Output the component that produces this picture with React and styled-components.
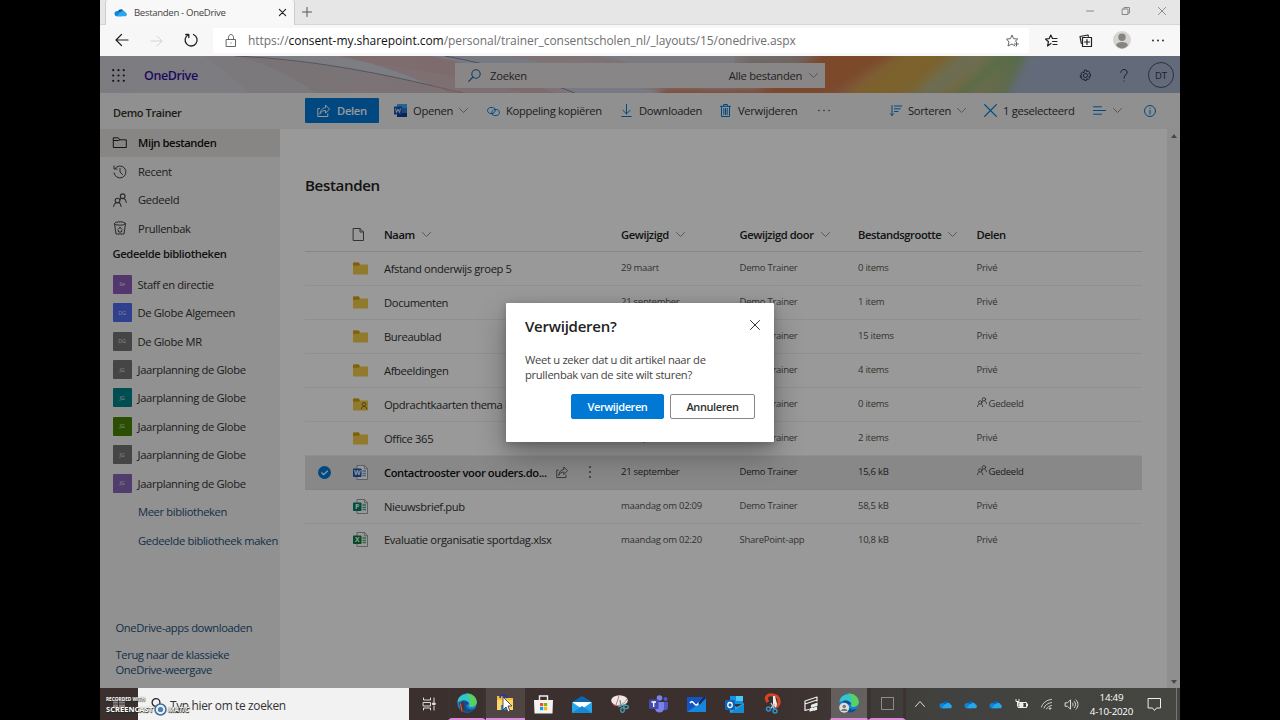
import React from "react";
import styled, { createGlobalStyle } from "styled-components";

const Global = createGlobalStyle`
  * { box-sizing: border-box; }
  html, body { margin: 0; padding: 0; background: #000; }
  body { width: 1280px; height: 720px; overflow: hidden; font-family: "Open Sans", "Noto Sans", sans-serif; font-size: 11.2px; letter-spacing: -0.36px; color: #323130; }
  svg { display: block; flex: none; overflow: visible; }
`;

const Screen = styled.div`
  width: 1080px; height: 720px; margin: 0 100px; display: flex; flex-direction: column; background: #fff; overflow: hidden;
`;

/* browser chrome */
const TabStrip = styled.div`
  height: 25px; flex: none; display: flex; background: #e6e6e6; border-bottom: 1px solid #d6d6d6;
`;
const Tab = styled.div`
  width: 190px; height: 25px; margin-left: 5px; padding: 0 8px 1px 8px; display: flex; align-items: center;
  background: #f8f8f8; border-left: 1px solid #ccc; border-right: 1px solid #ccc; border-radius: 3px 3px 0 0;
`;
const TabTitle = styled.span`
  flex: 1; margin-left: 7px; font-size: 9.6px; letter-spacing: -0.33px; color: #444; white-space: nowrap;
`;
const NewTab = styled.div`width: 24px; display: flex; align-items: center; justify-content: center;`;
const WindowButtons = styled.div`
  margin-left: auto; width: 108px; display: flex; align-items: center; justify-content: space-around; padding-bottom: 2px;
`;
const AddressRow = styled.div`
  height: 31px; flex: none; display: flex; align-items: center; background: #f7f7f7; padding-bottom: 1px;
`;
const NavButtons = styled.div`
  width: 113px; display: flex; align-items: center; padding-left: 15px; gap: 21px;
`;
const Address = styled.div`
  width: 816px; height: 25px; background: #fff; border-radius: 2px; display: flex; align-items: center; padding: 0 10px 0 12px;
`;
const Url = styled.span`
  flex: 1; margin-left: 11px; font-size: 12px; color: #6f6f6f; white-space: nowrap; letter-spacing: -0.05px;
  b { font-weight: 400; color: #111; }
`;
const BrowserTools = styled.div`
  flex: 1; display: flex; align-items: center; justify-content: space-between; padding: 0 16px 0 16px;
`;

/* page */
const Page = styled.div`
  position: relative; height: 632px; flex: none; display: flex; flex-direction: column; background: #fff;
`;
const Suite = styled.header`
  height: 37px; flex: none; display: grid; background: #d6d6e0; overflow: hidden;
  > * { grid-area: 1 / 1; }
`;
const SuiteRow = styled.div`
  position: relative; display: flex; align-items: center; padding: 1px 0 0 12px;
`;
const Brand = styled.span`
  width: 311px; margin-left: 19px; font-size: 12.5px; font-weight: 600; letter-spacing: -0.4px; color: #32109c;
`;
const SearchBox = styled.div`
  width: 370px; height: 25px; display: flex; align-items: center; padding: 0 7px 0 13px; background: #e3e0df; color: #3a3a3a;
`;
const SearchText = styled.span`flex: 1; margin-left: 9px; letter-spacing: -0.25px;`;
const SuiteTools = styled.div`
  flex: 1; display: flex; align-items: center; padding: 0 6px 0 254px;
`;
const Help = styled.div`width: 8px; margin-left: 28px;`;
const Initials = styled.div`
  width: 26px; height: 26px; margin-left: auto; border: 1px solid #48506a; border-radius: 50%; display: flex; align-items: center; justify-content: center;
  font-size: 9.5px; letter-spacing: 0; color: #2b3045;
`;
const Body = styled.div`flex: 1; display: flex; min-height: 0;`;
const Sidebar = styled.nav`
  width: 180px; flex: none; display: flex; flex-direction: column; background: #f2f2f2;
`;
const Owner = styled.div`
  height: 36px; padding: 10px 0 0 13px; background: #f1f1f1; font-weight: 600; font-size: 11px; line-height: 20px; letter-spacing: -0.38px;
`;
const NavItem = styled.div`
  height: ${p => p.$h || 28.45}px; flex: none; display: flex; align-items: center; padding: 0 0 ${p => p.$up || 0}px 12.5px; white-space: nowrap;
  background: ${p => (p.$active ? "#e1dfdd" : "transparent")};
  font-weight: ${p => (p.$active ? 600 : 400)};
  letter-spacing: ${p => (p.$active ? "-0.4px" : "-0.33px")};
  color: ${p => (p.$active ? "#111" : "#323130")};
  > svg { margin-right: 11.5px; }
`;
const NavHeading = styled.div`
  height: 27px; flex: none; padding: 0 0 0 12.5px; line-height: 24px; font-weight: 600; letter-spacing: -0.38px; white-space: nowrap; color: #222;
`;
const Tile = styled.span`
  width: 19px; height: 19px; margin-right: 6px; border-radius: 1px; display: flex; align-items: center; justify-content: center;
  background: ${p => p.$color}; color: #ddd; font-size: 5.5px; letter-spacing: -0.2px;
`;
const NavLink = styled.a`
  height: 28.45px; flex: none; display: flex; align-items: center; padding-left: 38px; color: #1d5078; white-space: nowrap;
`;
const Footer = styled.div`
  margin-top: auto; padding: 0 0 11px 15.5px; display: flex; flex-direction: column; gap: 12px; color: #1d5078; line-height: 15px; letter-spacing: -0.38px;
`;
const Main = styled.main`flex: 1; display: flex; flex-direction: column; min-width: 0;`;
const CommandBar = styled.div`
  height: 36px; flex: none; display: flex; align-items: center; padding: 0 0 1px 25px; background: #f1f1f1;
`;
const ShareButton = styled.div`
  width: 74px; height: 25px; display: flex; align-items: center; padding-left: 12px; gap: 7px; background: #0078d4; color: #fff; font-weight: 600; letter-spacing: -0.3px; border-radius: 1px;
`;
const Command = styled.div`
  display: flex; align-items: center; width: ${p => p.$w}px; gap: ${p => p.$gap || 6}px; margin-left: ${p => p.$ml || 0}px; white-space: nowrap; letter-spacing: -0.3px;
`;
const Workspace = styled.div`flex: 1; display: flex; min-height: 0;`;
const Content = styled.div`
  flex: 1; padding: 44px 25px 0 25px; display: flex; flex-direction: column;
`;
const Scrollbar = styled.div`
  width: 13px; background: #efefef; display: flex; flex-direction: column; justify-content: space-between; align-items: center; padding: 5px 0 4px;
`;
const Title = styled.h1`
  margin: 0; height: 44px; line-height: 24px; font-size: 15.1px; font-weight: 600; letter-spacing: -0.35px; color: #222;
`;
const columns = "79px 237px 118.5px 118.5px 118.5px 1fr";
const HeadRow = styled.div`
  height: 35px; flex: none; display: grid; grid-template-columns: ${columns}; align-items: center; border-bottom: 1px solid #e0e0e0; font-weight: 600; letter-spacing: -0.42px; color: #222;
`;
const HeadCell = styled.div`display: flex; align-items: center; gap: 7px; white-space: nowrap;`;
const Row = styled.div`
  height: 33.95px; flex: none; display: grid; grid-template-columns: ${columns}; align-items: center;
  border-bottom: 1px solid ${p => (p.$selected ? "#ddd" : "#f0f0f0")};
  background: ${p => (p.$selected ? "#e4e3e3" : "transparent")};
  color: ${p => (p.$selected ? "#323130" : "#555")};
  white-space: nowrap; font-size: 9.5px; letter-spacing: -0.26px;
  &:last-child { border-bottom-color: transparent; }
`;
const IconCell = styled.div`display: flex; align-items: center; justify-content: flex-end; padding-right: ${p => p.$pr || 16}px; gap: 22px;`;
const Name = styled.div`
  display: flex; align-items: center; font-size: 11.2px; font-weight: ${p => (p.$selected ? 600 : 400)}; color: ${p => (p.$selected ? "#111" : "#323130")}; letter-spacing: ${p => (p.$selected ? "-0.4px" : "-0.36px")};
`;
const NameActions = styled.span`display: flex; align-items: center; gap: 21px; margin-left: 9px;`;
const Cell = styled.div`display: flex; align-items: center; gap: 2px; padding-bottom: 1px; > svg { margin-bottom: 3px; }`;

const Overlay = styled.div`
  position: absolute; inset: 0; background: rgba(0, 0, 0, 0.4);
`;
const Dialog = styled.div`
  position: absolute; left: 406px; top: 247px; width: 268px; height: 139px; padding: 11px 19px; background: #fff; border-radius: 1px;
  box-shadow: 0 13px 30px rgba(0, 0, 0, 0.3), 0 2px 8px rgba(0, 0, 0, 0.22); display: flex; flex-direction: column;
`;
const DialogHead = styled.div`
  display: flex; align-items: flex-start; justify-content: space-between; font-size: 15px; font-weight: 600; letter-spacing: -0.25px; line-height: 24px; color: #222;
  > svg { margin: 6px -5px 0 0; }
`;
const DialogText = styled.p`margin: 14px 0 0; line-height: 15px; letter-spacing: -0.31px; color: #444; white-space: nowrap;`;
const DialogActions = styled.div`display: flex; justify-content: flex-end; gap: 6px; margin-top: 12px;`;
const DialogButton = styled.button`
  width: ${p => p.$w}px; height: 25px; padding: 0; font: 600 11px "Open Sans", sans-serif; letter-spacing: -0.4px; border-radius: 2px;
  border: 1px solid ${p => (p.$primary ? "#0078d4" : "#8a8886")};
  background: ${p => (p.$primary ? "#0078d4" : "#fff")};
  color: ${p => (p.$primary ? "#fff" : "#323130")};
`;

/* taskbar */
const Taskbar = styled.div`
  position: relative; height: 32px; flex: none; display: flex; background: linear-gradient(90deg, #3b302e 0%, #3c302e 62%, #41423f 78%, #454641 100%);
`;
const Start = styled.div`width: 38px; display: flex; align-items: center; justify-content: center;`;
const TaskSearch = styled.div`
  width: 271px; background: #f2f2f2; display: flex; align-items: center; padding: 2px 0 0 12px; gap: 7px; font-size: 11.9px; letter-spacing: -0.33px; color: #333; margin-right: 1px;
`;
const TaskCell = styled.div`
  width: 38.2px; display: flex; align-items: center; justify-content: center;
  background: ${p => (p.$hot ? "rgba(255,255,255," + p.$hot + ")" : "transparent")};
  border-bottom: ${p => (p.$open ? "2px solid #d98ad9" : "0")};
  border-left: ${p => (p.$gap ? p.$gap + "px solid #3b3331" : "0")};
  border-right: ${p => (p.$gap ? p.$gap + "px solid #3b3331" : "0")};
`;
const Tray = styled.div`
  flex: 1; display: flex; align-items: center; padding-left: 9px;
`;
const TrayIcon = styled.div`width: ${p => p.$w || 25}px; display: flex; justify-content: center;`;
const Clock = styled.div`
  width: 56px; display: flex; flex-direction: column; align-items: center; font-size: 9.8px; letter-spacing: -0.25px; line-height: 14.5px; color: #fff; white-space: nowrap; padding-top: 2px;
`;
const PeekLine = styled.div`width: 1px; height: 32px; margin-left: auto; margin-right: 3px; background: #777;`;
const Watermark = styled.div`
  position: absolute; left: 6px; top: 8px; color: #fff; font-weight: 700; text-shadow: 0.5px 0.5px 1px #222, 0 0 1px #444;
`;
const WatermarkSmall = styled.div`font-size: 4.8px; line-height: 7px; letter-spacing: -0.05px;`;
const WatermarkLarge = styled.div`
  display: flex; align-items: center; height: 12px; font-size: 7.4px; letter-spacing: 0.1px; gap: 1px; i { color: #eee; letter-spacing: -0.2px; }
`;

const Ic = ({ w = 14, h, vb, c = "#0078d4", s = 1, children }) => (
  <svg width={w} height={h || w} viewBox={vb || `0 0 ${w} ${h || w}`} fill="none" stroke={c} strokeWidth={s} strokeLinecap="round" strokeLinejoin="round">{children}</svg>
);
const Chevron = ({ c = "#777" }) => <Ic w={9} h={5} c={c} s={0.8}><path d="M.5.5l4 4 4-4" /></Ic>;
const Cloud = ({ w = 14 }) => (
  <svg width={w} height={w * 0.64} viewBox="0 0 28 18">
    <path d="M8 8C9 2 18 0 21 7l-7 6z" fill="#0a64b8" /><path d="M1 12c0-4 4-6 8-5l10 8-2 3H6c-3 0-5-3-5-6z" fill="#1284d8" />
    <path d="M12 10l7-4c4 0 5 2 5 3 5 1 5 9 0 9H6z" fill="#28a8ea" />
  </svg>
);
const Share = ({ c, w = 13 }) => <Ic w={w} vb="0 0 13 13" c={c}><path d="M2.500 4.500H.8v8h10V9.800M3 9.800C3.500 6 5.500 4 8.500 3.700V1l4 4.200-4 4V6.500C6 6.500 4.300 7.500 3 9.800z" /></Ic>;
const People = ({ c = "#444", w = 13 }) => (
  <Ic w={w} vb="0 0 13 13" c={c}><circle cx="9" cy="3" r="2.200" /><path d="M7.500 5.100L6.500 6.200M10.200 5.100c1.300.7 2 1.800 2.100 3.500" /><circle cx="4.200" cy="7" r="2.200" /><path d="M.6 12.500c.2-2 1.300-3.200 2.500-3.700M5.500 8.900c1.100.6 1.800 1.800 2 3.600" /></Ic>
);
const Cross = ({ w = 10, c = "#444", s = 1 }) => <Ic w={w} vb="0 0 10 10" c={c} s={s}><path d="M.5.5l9 9M9.500.5l-9 9" /></Ic>;
const Magnifier = ({ c = "#1467ac", w = 13 }) => <Ic w={w} vb="0 0 13 13" c={c} s={1.1}><circle cx="8" cy="5" r="4.200" /><path d="M5 8L.7 12.300" /></Ic>;
const Folder = ({ shared }) => (
  <svg width="15" height="13" viewBox="0 0 15 13">
    <path d="M0 1.200Q0 .5.700.5h5l1.300 2h7.300q.7 0 .7.700v8.600q0 .7-.7.700H.7q-.7 0-.7-.7z" fill="#f4cc4a" />
    <path d="M0 1.200Q0 .5.700.5h5l1.300 2-1.500 1.300H0z" fill="#d69e12" />
    {shared && <g fill="none" stroke="#8f6c1c"><circle cx="11" cy="6.300" r="1.800" /><path d="M8.300 11.300c.2-4 5.200-4 5.400 0" /></g>}
  </svg>
);
const Doc = ({ letter, color, light }) => (
  <svg width="15" height="15" viewBox="0 0 15 15">
    <path d="M4 .5h7.500l3 3v11H4z" fill="#fff" stroke="#888" strokeWidth=".8" /><path d="M11.300.5v3.300h3.200" fill="none" stroke="#888" strokeWidth=".8" />
    <path d="M9.500 6h3.500M9.500 8.300h3.500M9.500 10.500h3.500" stroke={light} strokeWidth="1.300" />
    <rect y="3.500" width="8.500" height="8.500" rx=".7" fill={color} /><text x="4.250" y="10.200" textAnchor="middle" fontSize="6.800" fontWeight="700" fill="#fff" fontFamily="Open Sans" letterSpacing="0">{letter}</text>
  </svg>
);
const Edge = ({ badge }) => (
  <svg width="20" height="20" viewBox="0 0 20 20">
    <circle cx="10" cy="10" r="9.700" fill="#1681ce" />
    <path d="M.5 9C1-1 19-2 19.700 9c.2 4-4 5.500-7.500 4.500C13.500 9 9 5.500.5 9z" fill="#36c7c5" />
    <path d="M9 .4C16 0 20 5 19.700 9.500c-.5 4-5 5-7.500 4C14 8 13 3 9 .4z" fill="#5ad15d" />
    <path d="M4 9c2-3 7-1 8 2-3 0-4 3 0 5 2 1 4 .5 6-.5-3 5-9 5-12 2C3 15 2.500 12 4 9z" fill="#124f91" />
    {badge ? <><circle cx="5.200" cy="14.800" r="5" fill="#ddd" /><circle cx="5.200" cy="13.400" r="1.700" fill="#777" /><path d="M2 18c.5-3 6-3 6.500 0z" fill="#777" /></>
      : <><path d="M2 10l4-1 2 9-4 1z" fill="#5a2e2a" /><path d="M3.500 10.500l1.500 8" stroke="#bd735c" /></>}
  </svg>
);

const Banner = () => (
  <svg width="1080" height="37" viewBox="0 0 1080 37" preserveAspectRatio="none">
    <defs>
      <linearGradient id="base" x1="0" x2="1">
        <stop offset="0" stopColor="#cfcfd6" /><stop offset=".2" stopColor="#d3cfd4" /><stop offset=".34" stopColor="#d6bfc3" /><stop offset=".62" stopColor="#cbc1c4" />
        <stop offset=".68" stopColor="#cb8564" /><stop offset=".71" stopColor="#d49a5c" /><stop offset=".76" stopColor="#cba854" /><stop offset=".81" stopColor="#b9b37a" />
        <stop offset=".85" stopColor="#93b27e" /><stop offset=".89" stopColor="#a5bcbc" /><stop offset=".94" stopColor="#a3b2d0" /><stop offset="1" stopColor="#b4b7cf" />
      </linearGradient>
      <filter id="soft" x="-20%" y="-80%" width="140%" height="260%"><feGaussianBlur stdDeviation="5" /></filter>
    </defs>
    <rect width="1080" height="37" fill="url(#base)" />
    <path d="M105 0h80l110 37H150z" fill="#cbc7c9" opacity=".6" />
    <path d="M135 0C230 4 300 23 370 37H215C195 22 170 8 135 0z" fill="#ccbcc2" opacity=".7" />
    <path d="M135 0h75c70 5 160 23 215 37h-60C300 20 225 5 135 0z" fill="#cfd2dd" />
    <path d="M135 0C225 4 300 22 363 37" fill="none" stroke="#8e8e9c" strokeWidth="1" />
    <path d="M240 0h100c50 14 80 24 115 37H350C310 20 280 8 240 0z" fill="#d0a9ac" opacity=".6" />
    <path d="M330 0h80c60 12 100 23 150 37h-90C420 20 380 10 330 0z" fill="#c8cbda" />
    <path d="M345 0c50 9 90 22 130 37M595 0c10 2 20 4 30 7" fill="none" stroke="#858595" />
    <path d="M500 0h135v37h-25C575 20 535 7 500 0z" fill="#cccdd6" />
    <g filter="url(#soft)">
      <path d="M635 45l100-55h75L720 45z" fill="#cf7a4a" /><path d="M650 0h65l-35 18h-50z" fill="#b6aaa6" /><path d="M740 45l80-55h45L785 45z" fill="#cfa348" />
      <path d="M805 45l65-55h30l-65 55z" fill="#b7b588" /><path d="M850 45l60-55h150v5H910l-50 50z" fill="#80b777" /><path d="M560 33h130v12H560z" fill="#d17750" /><path d="M810 42h100v8H810z" fill="#8d96aa" />
      <path d="M930 -5h170v48H905z" fill="#a5b2cc" />
    </g>
  </svg>
);

const libs = [
  ["Se", "Staff en directie", "#8a5ab8"], ["DG", "De Globe Algemeen", "#4f6bed"], ["DG", "De Globe MR", "#737373"], ["JG", "Jaarplanning de Globe", "#737373"],
  ["JG", "Jaarplanning de Globe", "#038387"], ["JG", "Jaarplanning de Globe", "#498205"], ["JG", "Jaarplanning de Globe", "#737373"], ["JG", "Jaarplanning de Globe", "#8764b8"],
];
const files = [
  ["folder", "Afstand onderwijs groep 5", "29 maart", "Demo Trainer", "0 items"],
  ["folder", "Documenten", "21 september", "Demo Trainer", "1 item"],
  ["folder", "Bureaublad", "21 september", "Demo Trainer", "15 items"],
  ["folder", "Afbeeldingen", "21 september", "Demo Trainer", "4 items"],
  ["shared", "Opdrachtkaarten thema herfst", "21 september", "Demo Trainer", "0 items", true],
  ["folder", "Office 365", "21 september", "Demo Trainer", "2 items"],
  ["word", "Contactrooster voor ouders.do...", "21 september", "Demo Trainer", "15,6 kB", true],
  ["pub", "Nieuwsbrief.pub", "maandag om 02:09", "Demo Trainer", "58,5 kB"],
  ["excel", "Evaluatie organisatie sportdag.xlsx", "maandag om 02:20", "SharePoint-app", "10,8 kB"],
];
const fileIcons = {
  folder: <Folder />, shared: <Folder shared />,
  word: <Doc letter="W" color="#185abd" light="#6ca2e5" />, pub: <Doc letter="P" color="#03806b" light="#39b29c" />, excel: <Doc letter="X" color="#107c41" light="#53af78" />,
};

const taskIcons = [
  { icon: <Ic w={13} h={12} c="#ddd"><path d="M.5 0v2h7V0M.5 4.500h7v3.500h-7zM.5 12v-2h7v2M11 0v4M11 8v4" /><path d="M9.800 5h2.400v1.500H9.800z" fill="#ddd" /></Ic> },
  { icon: <Edge />, open: true, gap: 3.5 },
  { icon: <svg width="19" height="18" viewBox="0 0 19 18"><path d="M1 2h5l2 2h9v12H1z" fill="#f1bf3d" /><path d="M1 6h16v10H1z" fill="#ffd667" /><path d="M5 16v-5h8v5" fill="#2f8bd4" /><path d="M4 4c0-4 6-4 7 0" fill="none" stroke="#2a32b4" strokeWidth="1.500" /><path d="M7 3v13l3-3 2 5 2-1-2-5h4z" fill="#fff" stroke="#333" strokeWidth=".8" /></svg>, open: true, hot: 0.1 },
  { icon: <svg width="19" height="19" viewBox="0 0 19 19"><path d="M5.500 6V1h8v5" fill="none" stroke="#eee" strokeWidth="1.400" /><path d="M0 5h19l-.5 13.500H.5z" fill="#f4f2f2" /><path d="M6 8h3.200v3.200H6z" fill="#f25022" /><path d="M10 8h3.200v3.200H10z" fill="#7fba00" /><path d="M6 12h3.200v3.200H6z" fill="#00a4ef" /><path d="M10 12h3.200v3.200H10z" fill="#ffb900" /></svg> },
  { icon: <svg width="20" height="17" viewBox="0 0 20 17"><path d="M0 6l10-6 10 6v11H0z" fill="#0a67b0" /><path d="M1 6h18v5l-9 3-9-3z" fill="#fff" /><path d="M0 6l10 7 10-7v11H0z" fill="#28a4e8" /><path d="M0 17l10-7 10 7z" fill="#1589d6" /></svg> },
  { icon: <svg width="18" height="18" viewBox="0 0 18 18"><ellipse cx="8.500" cy="5.500" rx="8.300" ry="5.200" fill="#f0e7e5" /><path d="M2 9c3 3 10 2 14-5M5 10l3-9" stroke="#c97a70" fill="none" /><g fill="none" stroke="#4b9caf" strokeWidth="1.300"><path d="M9 5l1 7M15 9l-8 3" /><ellipse cx="11.500" cy="15" rx="1.800" ry="2.400" /><ellipse cx="15" cy="12" rx="2.300" ry="1.700" /></g></svg> },
  { icon: <svg width="19" height="18" viewBox="0 0 19 18"><circle cx="10.500" cy="3" r="2.800" fill="#7b83eb" /><circle cx="16.500" cy="4" r="2" fill="#5059c9" /><path d="M13 7h6v5c0 4-5 4-6 1z" fill="#5059c9" /><path d="M6 7h9v6c0 6-9 6-9 0z" fill="#7b83eb" /><rect y="4.500" width="9.500" height="9.500" rx="1" fill="#444aac" /><path d="M2.500 7h4.500M4.700 7v5" stroke="#fff" strokeWidth="1.300" /></svg> },
  { icon: <svg width="19" height="15" viewBox="0 0 19 15"><path d="M0 0h19v15H0z" fill="#1255c0" /><path d="M0 15L19 2v13z" fill="#1686df" /><path d="M3 6c3-4 4 2 6 2s2-2 3-2" stroke="#fff" fill="none" strokeWidth="1.500" /><path d="M12 7l6-7" stroke="#162b55" strokeWidth="2" /></svg> },
  { icon: <svg width="19" height="17" viewBox="0 0 19 17"><path d="M5 0h13v8H5z" fill="#1490df" /><path d="M11 0h7v5h-7z" fill="#50c8f4" /><path d="M4 7l8 4 7-4v10H5z" fill="#28a8ea" /><path d="M5 17l14-9v9z" fill="#1589d2" /><rect y="4" width="10" height="10" rx="1" fill="#0f64b8" /><ellipse cx="5" cy="9" rx="2.200" ry="2.500" fill="none" stroke="#fff" strokeWidth="1.300" /></svg> },
  { icon: <svg width="16" height="20" viewBox="0 0 16 20"><path d="M3 8C-1 3 3 0 8 1c7 1 8 9 3 12" fill="none" stroke="#d64525" strokeWidth="3" /><path d="M8 2v9l3 3 1-4-2-8z" fill="#eee" /><path d="M6 9l4 7M10 10l-5 5" stroke="#b8c0c7" strokeWidth="1.500" /><g fill="none" stroke="#338ece" strokeWidth="1.500"><circle cx="3.500" cy="15" r="2" /><circle cx="10" cy="17" r="2" /></g></svg> },
  { icon: <Ic w={14} h={16} c="#eee" s={1.2}><path d="M4.500 13.500L1 14.500V5L13 1v4M1 8l12-4" /><path d="M7.500 9.200l5.500-2v2.300L7.500 11zM6 13l2.800-.8v2L6 15zM10 12l2.500-.8v2.200l-2.500.8z" fill="#eee" /></Ic> },
  { icon: <Edge badge />, open: true, hot: 0.2, gap: 1.5 },
  { icon: <svg width="13" height="13" viewBox="0 0 13 13"><path d="M.5.5h12v12H.5z" fill="none" stroke="#ddd" strokeDasharray="1 1" /></svg>, open: true, gap: 3.5 },
];

export default function App() {
  return (
    <>
      <Global />
      <Screen>
        <TabStrip>
          <Tab><Cloud w={13} /><TabTitle>Bestanden - OneDrive</TabTitle><Cross w={7} c="#222" s={1.6} /></Tab>
          <NewTab><Ic w={10} c="#555"><path d="M5 .5v9M.5 5h9" /></Ic></NewTab>
          <WindowButtons>
            <Ic w={8} h={8} c="#888"><path d="M.5 4h7" /></Ic>
            <Ic w={8} c="#888"><path d="M.5 2h5.500v5.500H.5zM2 2V.5h5.500V6H6" /></Ic>
            <Cross w={8} c="#777" />
          </WindowButtons>
        </TabStrip>
        <AddressRow>
          <NavButtons>
            <Ic w={14} c="#222" s={1.2}><path d="M13 7H1M6.500 1.500L1 7l5.500 5.500" /></Ic>
            <Ic w={13} c="#d4d4d4"><path d="M1 7h11M7 2l5 5-5 5" /></Ic>
            <Ic w={14} c="#222" s={1.3}><path d="M4.300 1.700A6 6 0 1 0 9.500 1.500M1.800 1.500h3v3" /></Ic>
          </NavButtons>
          <Address>
            <Ic w={12} h={13} c="#666"><path d="M1.500 5.500h9v7h-9zM3.500 5.500v-2c0-4 5-4 5 0v2M6 8.800v.3" /></Ic>
            <Url>https://<b>consent-my.sharepoint.com</b>/personal/trainer_consentscholen_nl/_layouts/15/onedrive.aspx</Url>
            <Ic w={13} c="#666"><path d="M9 12l-3-2-4 2 1-4L.5 5l4-.3L6 1l1.700 3.700 4 .3-2.700 2.500M10.500 8v4M8.500 10h4" /></Ic>
          </Address>
          <BrowserTools>
            <Ic w={13} c="#222" s={1.2}><path d="M6 9.500L2.500 12l1-4.300L.5 5l3.700-.4L5.800 1l1.700 3.500H12M7.500 7.500H12M8 10.500h4" /></Ic>
            <Ic w={13} c="#222" s={1.2}><path d="M3.500 3.500h9v9h-9zM2.300 9.500L1 2.500 9 1l.4 1.300M8 5.500v5M5.500 8h5" /></Ic>
            <svg width="18" height="18" viewBox="0 0 18 18"><circle cx="9" cy="9" r="9" fill="#d6d4d0" /><circle cx="9" cy="6.300" r="3.700" fill="#858481" /><path d="M3 14c1-4 11-4 12 0-3 4.500-9 4.500-12 0z" fill="#858481" /></svg>
            <svg width="12" height="3" viewBox="0 0 12 3" fill="#333"><circle cx="1" cy="1.500" r="1" /><circle cx="6" cy="1.500" r="1" /><circle cx="11" cy="1.500" r="1" /></svg>
          </BrowserTools>
        </AddressRow>

        <Page>
          <Suite>
            <Banner />
            <SuiteRow>
              <svg width="13" height="13" viewBox="0 0 13 13" fill="#222">{[1.2, 6.5, 11.8].map(y => [1.2, 6.5, 11.8].map(x => <circle key={x + "-" + y} cx={x} cy={y} r="1.100" />))}</svg>
              <Brand>OneDrive</Brand>
              <SearchBox><Magnifier /><SearchText>Zoeken</SearchText><Command $gap={7}>Alle bestanden <Chevron /></Command></SearchBox>
              <SuiteTools>
                <svg width="13" height="13" viewBox="0 0 13 13" fill="none" stroke="#26303c" strokeWidth=".9" strokeLinejoin="round"><circle cx="6.500" cy="6.500" r="2" /><path d="M5.500.5h2l.4 1.700 1.500-.9 1.400 1.400-.9 1.500 1.700.4v2l-1.700.5.9 1.500-1.400 1.400-1.500-.9-.4 1.700h-2l-.4-1.700-1.500.9-1.400-1.400.9-1.500L1.400 7.600v-2l1.700-.4-.9-1.500 1.400-1.400 1.500.9z" transform="translate(-.1 .6)" /></svg>
                <Help><Ic w={8} h={13} c="#26303c"><path d="M.8 3.300C1-.5 7.200-.3 7.200 3.300 7.200 5.500 4 6 4 9M4 12v.2" /></Ic></Help>
                <Initials>DT</Initials>
              </SuiteTools>
            </SuiteRow>
          </Suite>
          <Body>
            <Sidebar>
              <Owner>Demo Trainer</Owner>
              <NavItem $active $h={28} $up={1.5}><Ic w={14} h={11} c="#222"><path d="M.7.8h4.500l1.500 2h6.600v7.700H.7zM.7 3.500h4.500l1.500-.7" /></Ic>Mijn bestanden</NavItem>
              <NavItem $h={29}><Ic w={14} c="#444"><path d="M2 3.500A6 6 0 1 1 1 8M1 1v3h3M7 3.500V7l2.500 2.500" /></Ic>Recent</NavItem>
              <NavItem $h={28} $up={1}><People w={14} />Gedeeld</NavItem>
              <NavItem $h={28}><Ic w={14} c="#444"><ellipse cx="7" cy="2.500" rx="5.500" ry="1.700" /><path d="M1.500 2.500L3 13h8l1.500-10.500M5.500 8L7 6l1.500 2M9 9l-.7 2H5.700L5 9" /></Ic>Prullenbak</NavItem>
              <NavHeading>Gedeelde bibliotheken</NavHeading>
              <div style={{ height: 1 }} />
              {libs.map(([t, n, c], i) => <NavItem key={i}><Tile $color={c}>{t}</Tile>{n}</NavItem>)}
              <NavLink>Meer bibliotheken</NavLink>
              <NavLink>Gedeelde bibliotheek maken</NavLink>
              <Footer><span>OneDrive-apps downloaden</span><span>Terug naar de klassieke<br />OneDrive-weergave</span></Footer>
            </Sidebar>
            <Main>
              <CommandBar>
                <ShareButton><Share c="#fff" />Delen</ShareButton>
                <Command $ml={15} $w={93}><svg width="13" height="13" viewBox="0 0 13 13"><rect x="3" width="10" height="13" rx="1" fill="#2b7cd3" /><rect x="3" width="10" height="4" fill="#41a5ee" /><rect x="3" y="9" width="10" height="4" fill="#103f91" /><rect y="2.500" width="8" height="8" fill="#185abd" /><path d="M1.500 4.500l1 4 1.500-3.500 1.500 3.500 1-4" fill="none" stroke="#fff" strokeWidth=".8" /></svg>Openen <Chevron /></Command>
                <Command $w={134}><Ic w={13} h={10}><path d="M6 7.500H3.800C-.5 7.500-.5 1.500 3.800 1.500h1.500C9 1.500 9 6 6.500 7M7.500 3.500h1.700c4.300 0 4.300 6 0 6H7.500C4 9.500 4 5.500 6.200 4.200" /></Ic>Koppeling kopiëren</Command>
                <Command $w={99} $gap={7}><Ic w={11} h={13}><path d="M5.500.5v9.300M1.800 6.200l3.700 3.700 3.700-3.700M.8 12.500h9.400" /></Ic>Downloaden</Command>
                <Command $w={98} $gap={7}><Ic w={11} h={13}><path d="M.5 2.300h10M3.700 2V.5h3.600V2M1.500 2.500v10h8v-10M3.800 4.500v6M5.500 4.500v6M7.200 4.500v6" /></Ic>Verwijderen</Command>
                <svg width="12" height="3" viewBox="0 0 12 3" fill="#444"><circle cx="1" cy="1.500" r=".8" /><circle cx="6" cy="1.500" r=".8" /><circle cx="11" cy="1.500" r=".8" /></svg>
                <Command $ml={60} $w={94}><Ic w={12} h={11}><path d="M2 .5v10M.5 8.800L2 10.500l1.500-1.700M4.500 1h7.200M4.500 3.800h5.700M4.500 6.500h3.500" /></Ic>Sorteren <Chevron /></Command>
                <Command $w={109}><Cross w={13} c="#0078d4" />1 geselecteerd</Command>
                <Command $w={51} $gap={7}><Ic w={13} h={9}><path d="M.5.8h8M.5 4.500h12M.5 8.200h8" /></Ic><Chevron /></Command>
                <Ic w={12}><circle cx="6" cy="6" r="5.500" /><path d="M6 5.200V9M6 3v.3" /></Ic>
              </CommandBar>
              <Workspace>
                <Content>
                  <Title>Bestanden</Title>
                  <HeadRow>
                    <IconCell $pr={20}><Ic w={11} h={13} c="#555"><path d="M.5.5h6.500L10.500 4v8.500H.5zM7 .5V4h3.500" /></Ic></IconCell>
                    {["Naam", "Gewijzigd", "Gewijzigd door", "Bestandsgrootte"].map(t => <HeadCell key={t}>{t} <Chevron /></HeadCell>)}
                    <HeadCell>Delen</HeadCell>
                  </HeadRow>
                  {files.map(([k, n, d, by, size, shared]) => {
                    const sel = k === "word";
                    return (
                      <Row key={n} $selected={sel}>
                        <IconCell>
                          {sel && <svg width="13" height="13" viewBox="0 0 13 13"><circle cx="6.500" cy="6.500" r="6.500" fill="#0078d4" /><path d="M3.500 6.500l2.200 2.200 4-4" fill="none" stroke="#fff" strokeWidth="1.300" /></svg>}
                          {fileIcons[k]}
                        </IconCell>
                        <Name $selected={sel}>{n}{sel && <NameActions><Share c="#555" w={12} /><svg width="2" height="12" viewBox="0 0 2 12" fill="#444"><circle cx="1" cy="1" r=".9" /><circle cx="1" cy="6" r=".9" /><circle cx="1" cy="11" r=".9" /></svg></NameActions>}</Name>
                        <Cell>{d}</Cell><Cell>{by}</Cell><Cell>{size}</Cell>
                        <Cell>{shared ? <><People w={10} />Gedeeld</> : "Privé"}</Cell>
                      </Row>
                    );
                  })}
                </Content>
                <Scrollbar>
                  <svg width="6" height="4" viewBox="0 0 6 4" fill="#777"><path d="M0 4l3-4 3 4z" /></svg>
                  <svg width="6" height="4" viewBox="0 0 6 4" fill="#777"><path d="M0 0l3 4 3-4z" /></svg>
                </Scrollbar>
              </Workspace>
            </Main>
          </Body>
          <Overlay />
          <Dialog role="dialog">
            <DialogHead>Verwijderen?<Cross w={10} c="#333" /></DialogHead>
            <DialogText>Weet u zeker dat u dit artikel naar de<br />prullenbak van de site wilt sturen?</DialogText>
            <DialogActions><DialogButton $primary $w={93}>Verwijderen</DialogButton><DialogButton $w={85}>Annuleren</DialogButton></DialogActions>
          </Dialog>
        </Page>

        <Taskbar>
          <Start><svg width="12" height="12" viewBox="0 0 12 12" fill="#8c8583"><path d="M0 1.500l5-.7V5.500H0zM6 .7l6-.7v5.500H6zM0 6.500h5v4.700l-5-.7zM6 6.500h6V12l-6-.8z" /></svg></Start>
          <TaskSearch><Ic w={13} c="#222" s={1.3}><circle cx="6" cy="3.500" r="3.900" /><path d="M8.500 6.500L12 10" /></Ic>Typ hier om te zoeken</TaskSearch>
          {taskIcons.map((t, i) => <TaskCell key={i} $hot={t.hot} $open={t.open} $gap={t.gap}>{t.icon}</TaskCell>)}
          <Tray>
            <TrayIcon $w={10}><Ic w={10} h={6} c="#ddd"><path d="M.5 5.500l4.500-5 4.500 5" /></Ic></TrayIcon>
            <TrayIcon $w={40}><Cloud w={13} /></TrayIcon>
            <TrayIcon $w={11}><Cloud w={13} /></TrayIcon>
            <TrayIcon $w={39}><Cloud w={13} /></TrayIcon>
            <TrayIcon $w={12}><Ic w={13} h={10} c="#eee"><path d="M3.500 3.500h8v5h-8zM12.500 5v2" /><path d="M5 4.500h3v3H5z" fill="#eee" /><path d="M1 .5v2h3v-2M2.500 2.500V7" /></Ic></TrayIcon>
            <TrayIcon $w={38}><Ic w={11} h={11} c="#ccc"><path d="M.5 8C2 4 5 1 10.500.5M3 9c1-3 4-5 7.500-5.500M5.500 10c1-2 2.500-3 5-3.500" /><circle cx="9" cy="9.500" r=".8" fill="#eee" /></Ic></TrayIcon>
            <TrayIcon $w={12}><Ic w={13} h={11} c="#ddd"><path d="M.5 3.800h2l3-3v9.400l-3-3h-2zM7.500 4c.8.800.8 2.200 0 3M9.300 2.400c1.700 1.700 1.700 4.500 0 6.200M11 .8c2.700 2.700 2.700 6.700 0 9.400" /></Ic></TrayIcon>
            <TrayIcon $w={6} />
            <Clock><span>14:49</span><span>4-10-2020</span></Clock>
            <TrayIcon $w={30}><Ic w={13} h={13} c="#eee"><path d="M.5.5h12v9.500H8.500L6.500 12.500 4.500 10h-4z" /></Ic></TrayIcon>
            <PeekLine />
          </Tray>
          <Watermark>
            <WatermarkSmall>RECORDED WITH</WatermarkSmall>
            <WatermarkLarge>SCREENCAST<svg width="13" height="13" viewBox="0 0 13 13"><circle cx="6.500" cy="6.500" r="5.500" fill="#e8eef3" stroke="#456d91" strokeWidth="1.500" /><circle cx="6.500" cy="6.500" r="2.600" fill="#3f82bd" /></svg><i>MATIC</i></WatermarkLarge>
          </Watermark>
        </Taskbar>
      </Screen>
    </>
  );
}
